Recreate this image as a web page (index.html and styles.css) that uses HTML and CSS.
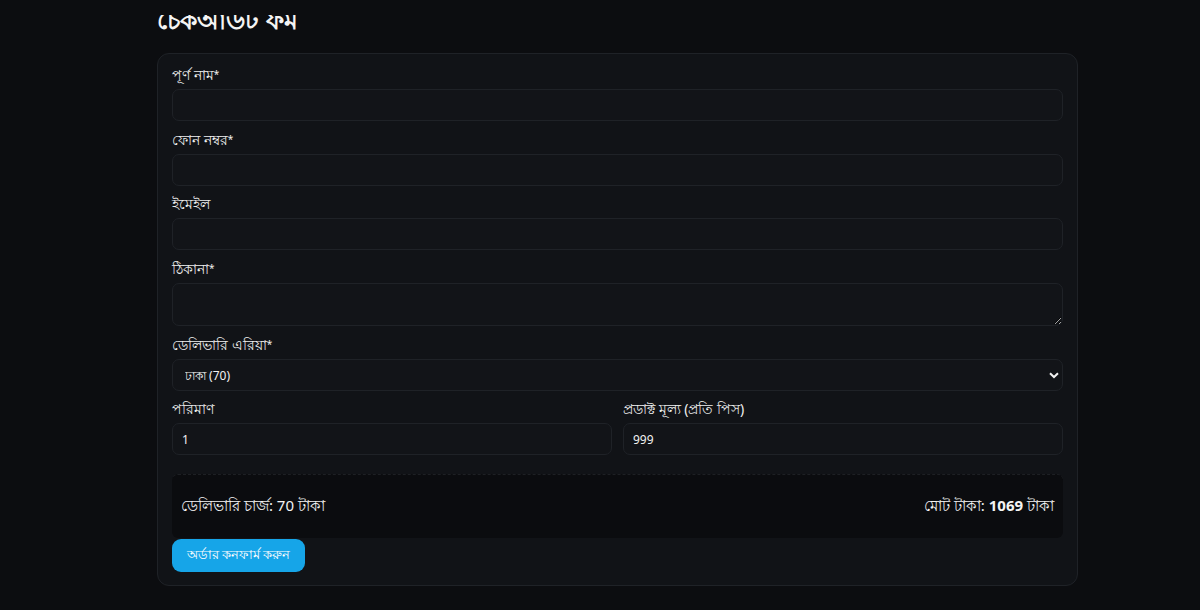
FILE: index.html
```html
<!DOCTYPE html>
<html lang="bn">
<head>
<meta charset="utf-8">
<title>চেকআউট ফর্ম</title>
<link rel="stylesheet" href="styles.css">
</head>
<body>
<div class="topbar"></div>
<main class="page">
  <h2 class="title">চেকআউট ফর্ম</h2>
  <form class="card">
    <div class="field">
      <label class="label">পূর্ণ নাম<span class="req">*</span></label>
      <input class="control" type="text">
    </div>
    <div class="field">
      <label class="label">ফোন নম্বর<span class="req">*</span></label>
      <input class="control" type="text">
    </div>
    <div class="field">
      <label class="label">ইমেইল</label>
      <input class="control" type="text">
    </div>
    <div class="field">
      <label class="label">ঠিকানা<span class="req">*</span></label>
      <textarea class="control area"></textarea>
    </div>
    <div class="field">
      <label class="label">ডেলিভারি এরিয়া<span class="req">*</span></label>
      <div class="select-wrap">
        <select class="control select"><option>ঢাকা (70)</option></select>
        <svg class="chev" width="10" height="7" viewBox="0 0 10 7"><path d="M1 1.2 L5 5 L9 1.2" fill="none" stroke="#f2f2f2" stroke-width="2"/></svg>
      </div>
    </div>
    <div class="row">
      <div class="field">
        <label class="label">পরিমাণ</label>
        <input class="control" type="text" value="1">
      </div>
      <div class="field">
        <label class="label">প্রডাক্ট মূল্য (প্রতি পিস)</label>
        <input class="control" type="text" value="999">
      </div>
    </div>
    <div class="summary">
      <span>ডেলিভারি চার্জ: 70 টাকা</span>
      <span>মোট টাকা: <b>1069</b> টাকা</span>
    </div>
    <button class="btn" type="button">অর্ডার কনফার্ম করুন</button>
  </form>
</main>
</body>
</html>
```

FILE: styles.css
```css
* { box-sizing: border-box; }
html, body {
  margin: 0;
  background: #0c0d10;
  color: #f1f1f1;
  font-family: "Noto Sans", "Open Sans", sans-serif;
  height: 610px;
  overflow: hidden;
}
.topbar {
  position: fixed;
  top: 0;
  left: 0;
  right: 0;
  height: 15px;
  background: #0c0d10;
  z-index: 5;
}
.page {
  width: 921px;
  margin-left: 157px;
}
.title {
  margin: 1px 0 16px;
  font-size: 25px;
  font-weight: 700;
  line-height: 36px;
  color: #f4f4f4;
}
.card {
  background: #111317;
  border: 1px solid #1f2227;
  border-radius: 12px;
  padding: 10px 14px 13px;
  display: flex;
  flex-direction: column;
}
.field {
  display: flex;
  flex-direction: column;
  margin-bottom: 8px;
}
.label {
  font-size: 14px;
  line-height: 20px;
  margin-bottom: 4px;
  color: #f0f0f0;
}
.req {
  font-size: 10px;
  vertical-align: 2px;
}
.control {
  height: 32px;
  width: 100%;
  background: #121418;
  border: 1px solid #1f2227;
  border-radius: 7px;
  color: #f1f1f1;
  font-family: "Noto Sans", "Open Sans", sans-serif;
  font-size: 12px;
  padding: 0 9px;
  outline: none;
}
.area {
  height: 43px;
  resize: vertical;
  padding: 6px 9px;
}
.select-wrap {
  position: relative;
}
.select {
  appearance: none;
  -webkit-appearance: none;
  height: 32px;
  padding-left: 12px;
}
.chev {
  position: absolute;
  right: 4px;
  top: 13px;
}
.row {
  display: grid;
  grid-template-columns: 1fr 1fr;
  gap: 11px;
  margin-bottom: 19px;
}
.row .field { margin-bottom: 0; }
.summary {
  height: 64px;
  background: #0b0c0f;
  border-top: 1px dashed #1e2024;
  border-radius: 6px;
  display: flex;
  align-items: center;
  justify-content: space-between;
  padding: 0 9px;
  font-size: 15px;
  color: #f4f4f4;
}
.summary b { font-weight: 700; }
.btn {
  align-self: flex-start;
  margin-top: 1px;
  height: 33px;
  width: 133px;
  border: none;
  border-radius: 9px;
  background: #16a5e8;
  color: #ffffff;
  font-family: "Noto Sans", "Open Sans", sans-serif;
  font-size: 13px;
  padding: 0;
}
```
